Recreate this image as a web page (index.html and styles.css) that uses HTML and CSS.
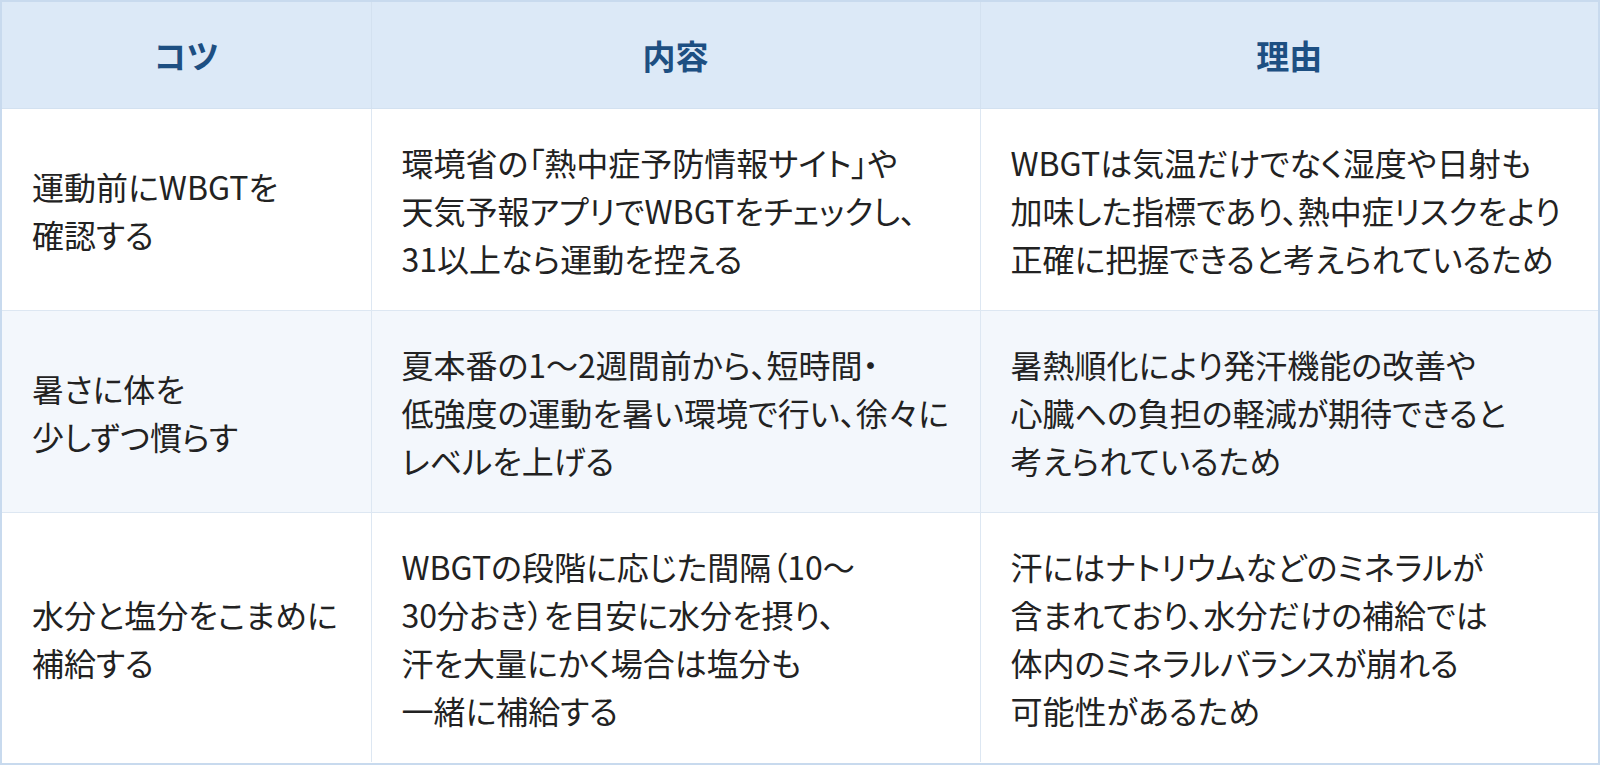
FILE: index.html
```html
<!DOCTYPE html>
<html lang="ja">
<head>
<meta charset="utf-8">
<title>熱中症対策のコツ</title>
<link rel="stylesheet" href="styles.css">
</head>
<body>
<div class="wrap">
<table class="tips">
  <colgroup>
    <col class="c1"><col class="c2"><col class="c3">
  </colgroup>
  <thead>
    <tr><th>コツ</th><th>内容</th><th>理由</th></tr>
  </thead>
  <tbody>
    <tr>
      <td>運動前にWBGTを<br>確認する</td>
      <td>環境省の「熱中症予防情報サイト」や<br>天気予報アプリでWBGTをチェックし、<br>31以上なら運動を控える</td>
      <td>WBGTは気温だけでなく湿度や日射も<br>加味した指標であり、熱中症リスクをより<br>正確に把握できると考えられているため</td>
    </tr>
    <tr class="alt">
      <td>暑さに体を<br>少しずつ慣らす</td>
      <td>夏本番の1〜2週間前から、短時間・<br>低強度の運動を暑い環境で行い、徐々に<br>レベルを上げる</td>
      <td>暑熱順化により発汗機能の改善や<br>心臓への負担の軽減が期待できると<br>考えられているため</td>
    </tr>
    <tr>
      <td>水分と塩分をこまめに<br>補給する</td>
      <td>WBGTの段階に応じた間隔（10〜<br>30分おき）を目安に水分を摂り、<br>汗を大量にかく場合は塩分も<br>一緒に補給する</td>
      <td>汗にはナトリウムなどのミネラルが<br>含まれており、水分だけの補給では<br>体内のミネラルバランスが崩れる<br>可能性があるため</td>
    </tr>
  </tbody>
</table>
</div>
</body>
</html>
```

FILE: styles.css
```css
html, body {
  margin: 0;
  padding: 0;
  background: #ffffff;
}
body {
  font-family: "Noto Sans CJK JP", "Noto Sans", sans-serif;
  color: #222222;
}
.wrap {
  width: 1600px;
  height: 765px;
  box-sizing: border-box;
  border: 2px solid #c8daee;
  overflow: hidden;
}
.tips {
  width: 100%;
  border-collapse: collapse;
  table-layout: fixed;
}
.c1 { width: 369px; }
.c2 { width: 609px; }
.tips th {
  height: 106px;
  padding: 0;
  background: #dce9f7;
  color: #1d4f82;
  font-size: 33px;
  font-weight: 700;
  text-align: center;
  vertical-align: middle;
  border: 1px solid #d3e1f0;
  border-top: none;
}
.tips td {
  padding: 29px 30px 28px 30px;
  font-size: 32px;
  font-weight: 400;
  line-height: 48px;
  font-feature-settings: "palt";
  text-align: left;
  vertical-align: middle;
  white-space: nowrap;
  border: 1px solid #dde7f2;
}
.tips tr > :first-child { border-left: none; }
.tips tr > :last-child { border-right: none; }
.tips tbody tr:last-child td { border-bottom: none; }
.tips tr.alt td { background: #f3f7fc; }
```
